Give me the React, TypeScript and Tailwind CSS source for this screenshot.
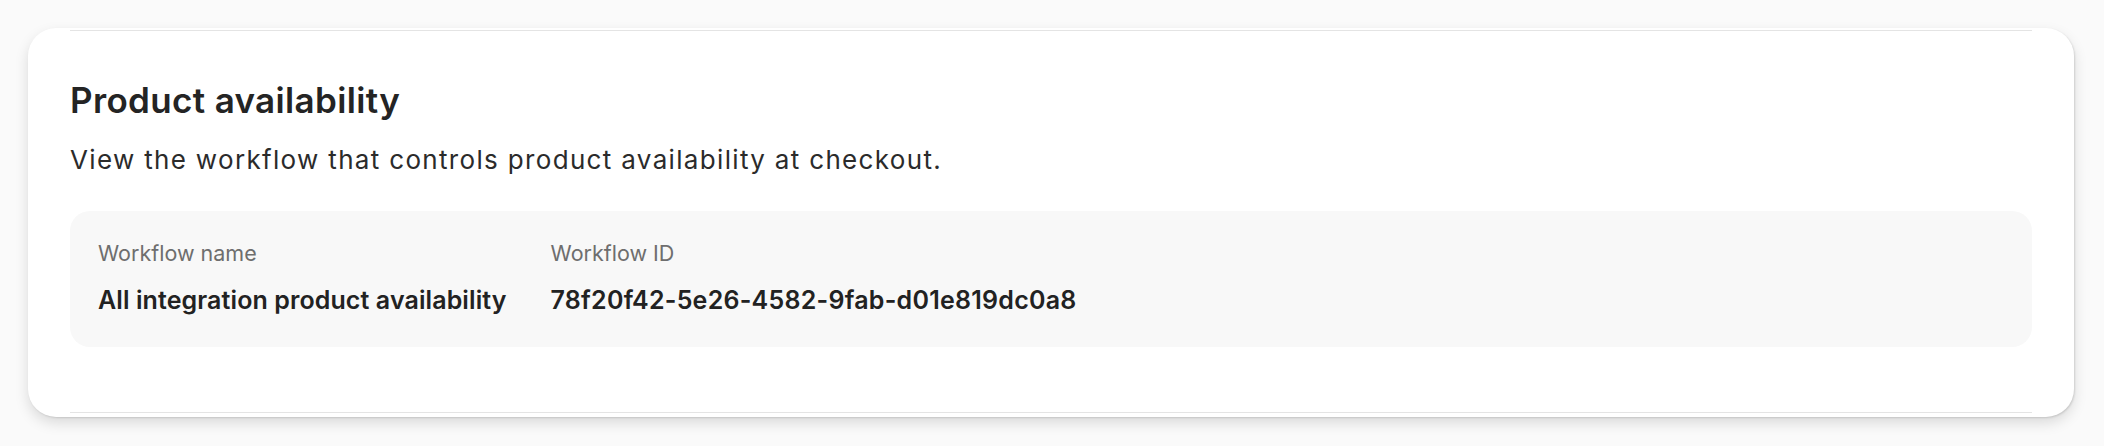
import React from "react";

const fields = [
  { label: "Workflow name", value: "All integration product availability", tracking: "tracking-[0.1px]" },
  { label: "Workflow ID", value: "78f20f42-5e26-4582-9fab-d01e819dc0a8", tracking: "tracking-[0.25px]" },
];

export default function App() {
  return (
    <div className="h-[446px] w-[2104px] bg-[#fafafa] pt-[28px] pl-[28px] font-['Inter',sans-serif]">
      <section className="h-[389px] w-[2046px] rounded-[28px] bg-white px-[42px] pt-[2px] shadow-[0_6px_14px_rgba(0,0,0,0.13),1px_1px_2px_rgba(0,0,0,0.12)]">
        <div className="border-y border-[#e4e4e4] pb-[65px]">
          <h2 className="pt-[47px] text-[35px] leading-[44px] font-semibold tracking-[0.35px] text-[#242424]">
            Product availability
          </h2>
          <p className="mt-[22px] text-[26px] leading-[32px] tracking-[1.33px] text-[#2b2b2b]">
            View the workflow that controls product availability at checkout.
          </p>
          <div className="mt-[35px] flex h-[136px] gap-[44px] rounded-[20px] bg-[#f8f8f8] px-[28px] pt-[27px]">
            {fields.map((field) => (
              <div key={field.label}>
                <div className="text-[21.5px] leading-[30px] text-[#6e6e6e]">{field.label}</div>
                <div className={`mt-[16px] text-[25px] leading-[32px] font-semibold text-[#222222] ${field.tracking}`}>
                  {field.value}
                </div>
              </div>
            ))}
          </div>
        </div>
      </section>
    </div>
  );
}
